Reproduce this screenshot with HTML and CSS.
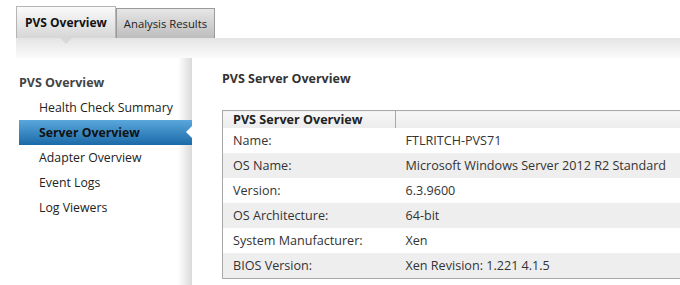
FILE: index.html
```html
<!DOCTYPE html>
<html lang="en">
<head>
    <meta charset="UTF-8">
    <title>PVS Overview</title>
    <link rel="stylesheet" href="styles.css">
</head>
<body>
    <div class="tabs">
        <div class="tab active">PVS Overview</div>
        <div class="tab">Analysis Results</div>
    </div>
    <div class="band"></div>

    <div class="main">
        <div class="sidebar">
            <h3>PVS Overview</h3>
            <ul class="nav">
                <li>Health Check Summary</li>
                <li class="selected">Server Overview</li>
                <li>Adapter Overview</li>
                <li>Event Logs</li>
                <li>Log Viewers</li>
            </ul>
        </div>

        <div class="panel">
            <h2>PVS Server Overview</h2>
            <table class="info">
                <thead>
                    <tr><th>PVS Server Overview</th><th></th></tr>
                </thead>
                <tbody>
                    <tr><td>Name:</td><td>FTLRITCH-PVS71</td></tr>
                    <tr><td>OS Name:</td><td>Microsoft Windows Server 2012 R2 Standard</td></tr>
                    <tr><td>Version:</td><td>6.3.9600</td></tr>
                    <tr><td>OS Architecture:</td><td>64-bit</td></tr>
                    <tr><td>System Manufacturer:</td><td>Xen</td></tr>
                    <tr><td>BIOS Version:</td><td>Xen Revision: 1.221 4.1.5</td></tr>
                </tbody>
            </table>
        </div>
    </div>
</body>
</html>
```

FILE: styles.css
```css
* {
    margin: 0;
    padding: 0;
    box-sizing: border-box;
}

body {
    width: 680px;
    height: 285px;
    overflow: hidden;
    background: #ffffff;
    color: #333333;
    font-family: 'Open Sans', sans-serif;
    font-size: 12px;
}

.tabs {
    display: flex;
    align-items: flex-end;
    padding: 6px 0 0 16px;
    height: 38px;
}

.tab {
    position: relative;
    height: 30px;
    padding: 0 7px;
    display: flex;
    align-items: center;
    font-size: 11.3px;
    color: #222222;
    background: linear-gradient(#e6e6e6, #bdbdbd);
    border: 1px solid #9a9a9a;
    border-bottom: none;
}

.tab.active {
    height: 32px;
    padding: 0 8px;
    font-size: 12px;
    font-weight: bold;
    color: #111111;
    background: linear-gradient(#fafafa, #d6d6d6);
    border-color: #b5b5b5;
}

.tab.active::after {
    content: "";
    position: absolute;
    left: 43px;
    bottom: -6px;
    border-left: 6px solid transparent;
    border-right: 6px solid transparent;
    border-top: 6px solid #d8d8d8;
}

.band {
    height: 20px;
    margin-left: 16px;
    background: linear-gradient(#e4e4e4, #fbfbfb);
}

.main {
    display: flex;
    height: 227px;
}

.sidebar {
    flex-shrink: 0;
    width: 192px;
    padding: 13px 0 0 19px;
    background: linear-gradient(to right, #ffffff 178px, #dadada 192px);
}

.sidebar h3 {
    font-size: 12.5px;
    font-weight: bold;
    color: #444444;
    height: 24px;
    line-height: 24px;
}

.nav {
    list-style: none;
}

.nav li {
    position: relative;
    height: 25px;
    line-height: 25px;
    padding-left: 20px;
    font-size: 12.3px;
    color: #222222;
}

.nav li.selected {
    font-weight: bold;
    color: #111111;
    background: linear-gradient(#5aa7dc, #1b6aa8);
}

.nav li.selected::after {
    content: "";
    position: absolute;
    right: 0;
    top: 6px;
    border-top: 6px solid transparent;
    border-bottom: 6px solid transparent;
    border-right: 6px solid #ffffff;
}

.panel {
    flex: 1;
    min-width: 0;
    overflow: hidden;
    padding: 10px 0 0 30px;
    background: #ffffff;
}

.panel h2 {
    font-size: 12.5px;
    font-weight: bold;
    color: #333333;
    height: 22px;
    line-height: 22px;
    margin-bottom: 20px;
}

.info {
    width: 490px;
    border-collapse: collapse;
    border: 1px solid #a8a8a8;
    font-size: 12.6px;
}

.info th {
    height: 17px;
    text-align: left;
    padding-left: 10px;
    font-weight: bold;
    color: #222222;
    background: linear-gradient(#f7f7f7, #ececec);
    border-top: 1px solid #a8a8a8;
}

.info th + th {
    border-left: 1px solid #a8a8a8;
}

.info td {
    height: 25px;
    padding-left: 10px;
    color: #333333;
}

.info td:first-child {
    width: 173px;
}

.info tbody tr:nth-child(even) td {
    background: #eeeeee;
}
```
